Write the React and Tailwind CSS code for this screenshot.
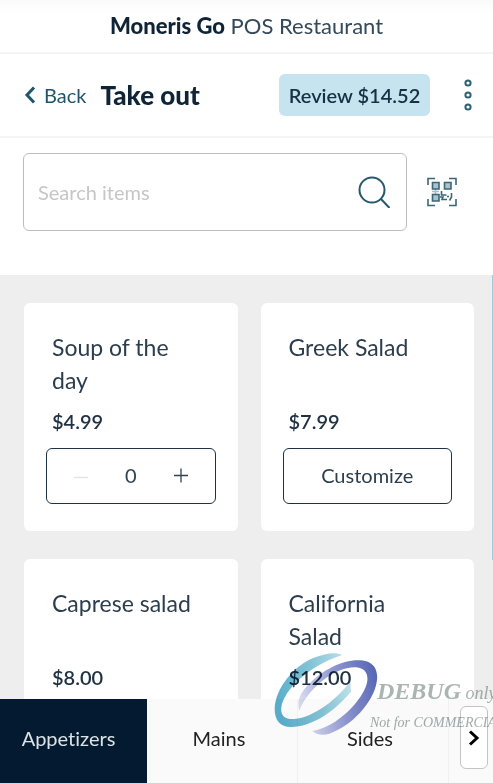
import React, { useState } from "react";

const items = [
  { name: "Soup of the day", price: "$4.99", counter: true },
  { name: "Greek Salad", price: "$7.99" },
  { name: "Caprese salad", price: "$8.00" },
  { name: "California Salad", price: "$12.00" },
];

function Counter({ name }) {
  const [count, setCount] = useState(0);
  return (
    <div className="-mx-1.5 flex h-14 items-center justify-between rounded-md border border-[#1d3345] px-6 pb-0.5">
      <button
        type="button"
        aria-label={`Remove one ${name}`}
        disabled={count === 0}
        onClick={() => setCount(count - 1)}
        className="flex size-5 items-center justify-center text-[#30424f] disabled:text-[#e3e5e7]"
      >
        <svg viewBox="0 0 20 20" className="size-5" fill="none" stroke="currentColor" strokeWidth="1.5">
          <path d="M3 12.5H17" />
        </svg>
      </button>
      <output className="text-xl text-[#30424f]">{count}</output>
      <button
        type="button"
        aria-label={`Add one ${name}`}
        onClick={() => setCount(count + 1)}
        className="flex size-5 items-center justify-center text-[#30424f]"
      >
        <svg viewBox="0 0 20 20" className="size-5" fill="none" stroke="currentColor" strokeWidth="1.3">
          <path d="M4 10.5H18M11 3.5V17.5" />
        </svg>
      </button>
    </div>
  );
}

function Card({ item }) {
  return (
    <article className="flex flex-col rounded-md bg-white px-7 pt-7 pb-[27px]">
      <h2 className="h-[66px] pr-4 text-[23px] leading-[33px] text-[#2c3e4d]">{item.name}</h2>
      <p className="mt-2 mb-[11px] text-xl leading-8 font-semibold text-[#1f3142]">{item.price}</p>
      {item.counter ? (
        <Counter name={item.name} />
      ) : (
        <button
          type="button"
          className="-mx-1.5 h-14 rounded-md border border-[#1d3345] pb-0.5 text-xl text-[#2c3e4d]"
        >
          Customize
        </button>
      )}
    </article>
  );
}

function QrIcon() {
  return (
    <svg viewBox="0 0 30 30" className="size-[30px]" fill="none" stroke="#3b6678" strokeWidth="1.6">
      <path d="M1 8V1.5H8M22 1.5H29V8M29 22V28.5H22M8 28.5H1V22" />
      <path d="M8.500 12V17M5 14.500H12" stroke="#a9bec6" />
      <g fill="#a9c3cd">
        <path d="M5.500 5.500H12V12H5.500ZM17.500 5.500H24V12H17.500ZM5.500 17.500H12V24H5.500Z" />
      </g>
      <path d="M14.500 14V18H19.500M13 20H16L15 22.500H20" />
      <path d="M24.500 16V20L22.500 23.500M20 19.500H22" />
    </svg>
  );
}

function Watermark() {
  return (
    <div className="pointer-events-none absolute right-0 bottom-9 h-24 w-[228px] overflow-hidden mix-blend-multiply">
      <svg viewBox="0 0 360 300" className="absolute top-[-6px] left-0 h-[100px] w-[120px]">
        <defs>
          <linearGradient id="cyanRing" x1="0" y1="0.4" x2="1" y2="0.2">
            <stop offset="0" stopColor="#5bb0cc" />
            <stop offset="0.5" stopColor="#83c3d6" />
            <stop offset="1" stopColor="#c3e3eb" />
          </linearGradient>
          <linearGradient id="violetRing" x1="0" y1="0.5" x2="1" y2="0.25">
            <stop offset="0" stopColor="#dadcf1" />
            <stop offset="0.5" stopColor="#8f98d2" />
            <stop offset="1" stopColor="#5767b4" />
          </linearGradient>
        </defs>
        <path
          fill="url(#cyanRing)"
          d="M232 30C214 21 186 22 145 39C88 62 30 130 29 192C29 226 45 246 78 246C140 245 207 201 258 140L256 110C215 163 148 216 88 222C60 224 46 211 49 188C56 132 140 58 232 30Z"
        />
        <path
          fill="url(#violetRing)"
          d="M103 197C95 170 103 148 128 121C175 70 245 38 297 47C329 53 341 78 335 112C325 172 260 244 193 266C173 272 153 269 142 258C205 248 270 190 298 135C316 100 308 70 274 67C215 63 130 127 103 197Z"
        />
      </svg>
      <p className="absolute top-6 left-[112px] font-['Liberation_Serif',serif] text-lg leading-8 whitespace-nowrap text-[#aab5b2] italic">
        <b className="text-2xl leading-8">DEBUG</b> only
      </p>
      <p className="absolute top-[62px] left-[105px] font-['Liberation_Serif',serif] text-sm leading-5 whitespace-nowrap text-[#a0acaa] italic">
        Not for COMMERCIAL
      </p>
    </div>
  );
}

export default function App() {
  return (
    <div className="relative flex h-screen flex-col overflow-hidden bg-white font-['Lato','Open_Sans',sans-serif] text-[#0f2437] [font-variant-ligatures:none]">
      <div className="h-[54px] shrink-0 border-b-2 border-[#f4f4f4] bg-linear-to-b from-[#fafafa] to-white to-25% text-center text-[22px] leading-[51px] text-[#34495a]">
        <b className="font-black text-[#0f2437]">Moneris Go</b> POS Restaurant
      </div>

      <header className="flex h-[84px] shrink-0 items-center border-b-2 border-[#f4f4f4] pr-[17px] pl-6">
        <a href="#back" className="flex items-center gap-2 text-xl text-[#1f566b]">
          <svg viewBox="0 0 12 18" className="h-[18px] w-3" fill="none" stroke="currentColor" strokeWidth="3">
            <path d="M10 1.5L3 9L10 16.5" />
          </svg>
          Back
        </a>
        <h1 className="ml-3.5 text-[26px] font-black">Take out</h1>
        <button
          type="button"
          className="ml-auto h-[42px] w-[151px] rounded-md bg-[#c5e4f0] text-xl font-semibold whitespace-nowrap text-[#173044]"
        >
          Review $14.52
        </button>
        <button type="button" aria-label="More options" className="ml-[30px] flex w-4 justify-center">
          <svg viewBox="0 0 8 32" className="h-8 w-2" fill="none" stroke="#2d6275" strokeWidth="2">
            <circle cx="4" cy="4" r="2.6" />
            <circle cx="4" cy="16" r="2.6" />
            <circle cx="4" cy="28" r="2.6" />
          </svg>
        </button>
      </header>

      <div className="flex h-[137px] shrink-0 items-start pt-[15px] pr-9 pl-[23px]">
        <div className="flex h-[78px] min-w-0 flex-1 items-center rounded-md border border-[#bdbdbd] pr-4 pl-3.5">
          <input
            type="search"
            aria-label="Search items"
            placeholder="Search items"
            className="min-w-0 flex-1 bg-transparent text-xl outline-none placeholder:text-[#c6c6c6]"
          />
          <button type="button" aria-label="Search">
            <svg viewBox="0 0 32 32" className="size-8" fill="none" stroke="#28586c" strokeWidth="2">
              <circle cx="14" cy="14" r="12.5" />
              <path d="M22.500 22.500L31.500 32" />
            </svg>
          </button>
        </div>
        <button type="button" aria-label="Scan code" className="ml-5 flex h-[78px] items-center">
          <QrIcon />
        </button>
      </div>

      <main className="relative min-h-0 flex-1 overflow-hidden bg-[#eeeeee] pt-7 pr-[19px] pl-6">
        <div className="absolute top-0 right-0 h-[285px] w-px bg-[#9fcbdd]" />
        <div className="grid grid-cols-2 gap-x-[23px] gap-y-7">
          {items.map((item) => (
            <Card key={item.name} item={item} />
          ))}
        </div>
      </main>

      <nav className="grid h-[84px] shrink-0 grid-cols-[147fr_151fr_151fr_44px] bg-[#fafafa] text-xl text-[#222222]">
        <button type="button" aria-current="page" className="bg-[#031a30] pr-2.5 pb-1.5 text-[#dde2e6]">
          Appetizers
        </button>
        <button type="button" className="border-r border-[#f1f1f1] pr-1.5 pb-1.5">
          Mains
        </button>
        <button type="button" className="border-r border-[#f1f1f1] pr-1.5 pb-1.5">
          Sides
        </button>
        <div className="pt-[7px] pl-[11px]">
          <button
            type="button"
            aria-label="More categories"
            className="flex h-[63px] w-7 items-center justify-center rounded-md border border-[#c4c4c4] bg-white"
          >
            <svg viewBox="0 0 12 16" className="h-4 w-3" fill="none" stroke="#000000" strokeWidth="3">
              <path d="M2 1.5L9 8L2 14.5" />
            </svg>
          </button>
        </div>
      </nav>

      <Watermark />
    </div>
  );
}
